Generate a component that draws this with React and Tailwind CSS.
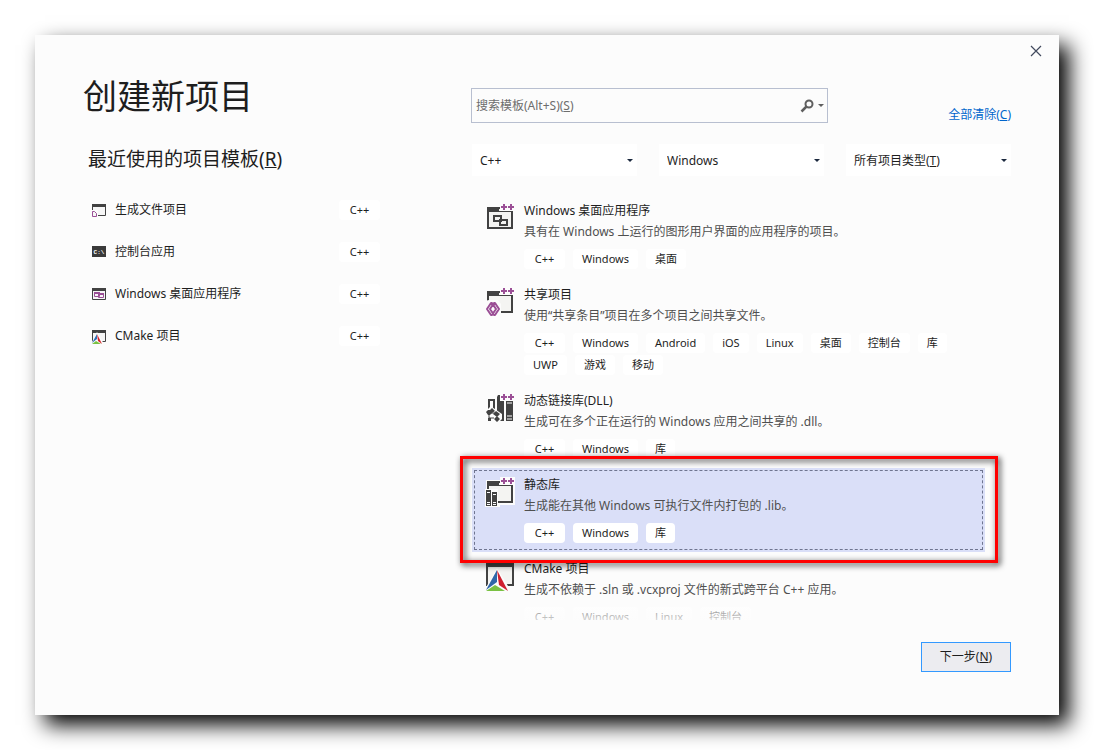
import { useState } from 'react'
import clsx from 'clsx'

const RECENT_TEMPLATES = [
  { id: 'makefile', name: '生成文件项目', tag: 'C++', icon: MakefileIcon },
  { id: 'console', name: '控制台应用', tag: 'C++', icon: ConsoleIcon },
  { id: 'desktop', name: 'Windows 桌面应用程序', tag: 'C++', icon: DesktopSmallIcon },
  { id: 'cmake', name: 'CMake 项目', tag: 'C++', icon: CMakeSmallIcon }
]

const TEMPLATES = [
  {
    id: 'desktop',
    name: 'Windows 桌面应用程序',
    description: '具有在 Windows 上运行的图形用户界面的应用程序的项目。',
    tags: ['C++', 'Windows', '桌面'],
    icon: DesktopIcon
  },
  {
    id: 'shared',
    name: '共享项目',
    description: '使用“共享条目”项目在多个项目之间共享文件。',
    tags: ['C++', 'Windows', 'Android', 'iOS', 'Linux', '桌面', '控制台', '库', 'UWP', '游戏', '移动'],
    icon: SharedIcon
  },
  {
    id: 'dll',
    name: '动态链接库(DLL)',
    description: '生成可在多个正在运行的 Windows 应用之间共享的 .dll。',
    tags: ['C++', 'Windows', '库'],
    icon: DllIcon
  },
  {
    id: 'static',
    name: '静态库',
    description: '生成能在其他 Windows 可执行文件内打包的 .lib。',
    tags: ['C++', 'Windows', '库'],
    icon: StaticLibIcon,
    highlighted: true
  },
  {
    id: 'cmake',
    name: 'CMake 项目',
    description: '生成不依赖于 .sln 或 .vcxproj 文件的新式跨平台 C++ 应用。',
    tags: ['C++', 'Windows', 'Linux', '控制台'],
    icon: CMakeIcon
  }
]

/* ---------- icons ---------- */

function SmallIcon({ children }) {
  return (
    <svg viewBox="0 0 16 16" className="size-4 shrink-0" aria-hidden="true">
      {children}
    </svg>
  )
}

function SmallFrame() {
  return (
    <>
      <path d="M1.5 2.5h13v11h-13z" fill="#f6f6f6" stroke="#424242" />
      <path d="M1 2h14v3H1z" fill="#424242" />
    </>
  )
}

function MakefileIcon() {
  return (
    <SmallIcon>
      <SmallFrame />
      <path d="M0 8h7v8H0z" fill="#fcfcfc" />
      <path d="M1.5 9.5h2l2 2v3h-4z" fill="#f6f6f6" stroke="#9b4f96" />
    </SmallIcon>
  )
}

function ConsoleIcon() {
  return (
    <SmallIcon>
      <path d="M1 2h14v11H1z" fill="#3a3a3a" />
      <text x="8" y="10" fontSize="6" fontWeight="700" textAnchor="middle" fill="#fff" fontFamily="Liberation Mono, monospace">
        C:\
      </text>
    </SmallIcon>
  )
}

function DesktopSmallIcon() {
  return (
    <SmallIcon>
      <SmallFrame />
      <path d="M3.5 6.5h5v4h-5zM7.5 7.5h5v4h-5z" fill="#f6f6f6" stroke="#9b4f96" />
      <path d="M3 6h6v2H3zM7 7h6v2H7z" fill="#9b4f96" />
    </SmallIcon>
  )
}

function CMakeSmallIcon() {
  return (
    <SmallIcon>
      <SmallFrame />
      <path d="M6 4L0 16h13z" fill="#fcfcfc" />
      <path d="M6 6L1 15l5-4z" fill="#2f6fb5" />
      <path d="M6 6l5 10-4-3z" fill="#d81f2a" />
      <path d="M1 16l4-3 5 3z" fill="#7ac143" />
    </SmallIcon>
  )
}

function LargeIcon({ children }) {
  return (
    <svg viewBox="0 0 30 30" className="size-[30px] shrink-0" aria-hidden="true">
      {children}
    </svg>
  )
}

function PlusPlus() {
  return (
    <>
      <path d="M15 0h15v8H15z" fill="#fcfcfc" />
      <path d="M18 1h2v2h2v2h-2v2h-2V5h-2V3h2zM25 1h2v2h2v2h-2v2h-2V5h-2V3h2z" fill="#9b4f96" />
    </>
  )
}

function Frame() {
  return (
    <>
      <path d="M3 5h24v20H3z" fill="#f4f4f2" stroke="#424242" strokeWidth="2" />
      <path d="M2 4h12v4h14v1H2z" fill="#424242" />
    </>
  )
}

function DesktopIcon() {
  return (
    <LargeIcon>
      <Frame />
      <path d="M9 13h7v5H9zM15 17h7v5h-7z" fill="#f4f4f2" stroke="#424242" strokeWidth="2" />
      <PlusPlus />
    </LargeIcon>
  )
}

function SharedIcon() {
  return (
    <LargeIcon>
      <Frame />
      <path d="M0 14l4-1h9l3 4v13H0z" fill="#fcfcfc" />
      <path
        d="M6 16h1l4 6-4 6H6l-4-6zM9 16h1l4 6-4 6H9l-4-6z"
        fill="none"
        stroke="#9b4f96"
        strokeWidth="2"
        strokeLinejoin="round"
      />
      <PlusPlus />
    </LargeIcon>
  )
}

function DllIcon() {
  return (
    <LargeIcon>
      <path d="M4 7h5v9H4z" fill="#fcfcfc" stroke="#424242" strokeWidth="2" />
      <path d="M12 4l1-2h6v26h-7zM21 8h7v20h-7z" fill="#424242" />
      <PlusPlus />
      <path d="M22 10h5M22 23h5M22 26h5" stroke="#fcfcfc" />
      <path d="M3 25v3h3v-3z" fill="#424242" />
      <path d="M0 19l5-5h2l10 7v5l-4 4-7-6z" fill="#fcfcfc" />
      <path d="M1 19l2-2h2l2-2 3 3-3 2-2 2H3zM8 21l3-3 4 3-3 3zM9 26l3-3 3 3-3 3z" fill="#424242" />
      <path d="M4 21v4h5M6 20h4" fill="none" stroke="#424242" />
    </LargeIcon>
  )
}

function StaticLibIcon() {
  return (
    <LargeIcon>
      <path d="M1 3h14V0h15v28H15v2H0V12h1z" fill="#fcfcfc" />
      <Frame />
      <path d="M0 12h13v18H0z" fill="#fcfcfc" />
      <path d="M1 13h5v16H1zM7 15h5v14H7z" fill="#424242" />
      <path d="M2 15h3v1H2zM8 17h3v1H8z" fill="#fcfcfc" />
      <path d="M2 25.5h3M2 27.5h3M8 25.5h3M8 27.5h3" stroke="#fcfcfc" />
      <PlusPlus />
    </LargeIcon>
  )
}

function CMakeIcon() {
  return (
    <LargeIcon>
      <path d="M2 2h26v22H2z" fill="#f4f4f2" stroke="#424242" strokeWidth="2" />
      <path d="M1 1h28v5H1z" fill="#424242" />
      <path d="M12 7L-1 30h27z" fill="#fcfcfc" />
      <path d="M12 9L1 29l11-8z" fill="#2f66a8" />
      <path d="M12 9l11 21-9-6z" fill="#cf2030" />
      <path d="M1 30l9-6 10 6z" fill="#7ac143" />
    </LargeIcon>
  )
}

function Caret({ className }) {
  return (
    <svg viewBox="0 0 6 3" className={clsx('h-[3px] w-[6px] pointer-events-none', className)} aria-hidden="true">
      <path d="M0 0h6L3 3z" fill="currentColor" />
    </svg>
  )
}

/* ---------- pieces ---------- */

function Tag({ children }) {
  return (
    <span
      className={clsx(
        'h-5 rounded bg-white px-[9px] text-center text-[11px] leading-5 whitespace-nowrap text-[#1e1e1e]',
        children === 'C++' && 'min-w-[41px]'
      )}
    >
      {children}
    </span>
  )
}

function FilterSelect({ id, label, placeholder, options, value, onChange }) {
  return (
    <div className="relative min-w-0 flex-1">
      <select
        id={id}
        aria-label={label}
        value={value}
        onChange={e => onChange(e.target.value)}
        className="h-8 w-full appearance-none bg-white pt-[2px] pr-5 pl-2 text-[12px] text-[#1e1e1e] outline-none"
      >
        {options.map(option => (
          <option key={option} value={option}>{option}</option>
        ))}
      </select>
      {placeholder && !value && (
        <label htmlFor={id} className="pointer-events-none absolute top-px left-2 leading-8">
          {placeholder}
        </label>
      )}
      <Caret className="absolute top-[15px] right-[4px] text-[#1b293e]" />
    </div>
  )
}

function TemplateItem({ template, isSelected, onSelect }) {
  const Icon = template.icon

  return (
    <li className="relative">
      <button
        type="button"
        onClick={() => onSelect(template.id)}
        className={clsx(
          'flex w-full items-start gap-[9px] pt-[6px] pr-2 pb-[9px] pl-[13px] text-left',
          isSelected && 'bg-[#dadff8] outline-1 -outline-offset-3 outline-dashed outline-[#6f7590]'
        )}
      >
        <span className="pt-[3px]"><Icon /></span>
        <span className="min-w-0 flex-1">
          <span className="block leading-[21px]">{template.name}</span>
          <span className="block leading-[21px] text-[#4f4f4f]">{template.description}</span>
          <span className="mt-[7px] flex flex-wrap gap-x-2 gap-y-[2px]">
            {template.tags.map(tag => <Tag key={tag}>{tag}</Tag>)}
          </span>
        </span>
      </button>
      {template.highlighted && (
        <div className="pointer-events-none absolute -top-3 -right-[13px] -bottom-[11px] -left-3 z-10 border-3 border-[#ff0000] drop-shadow-[2px_2px_3px_rgba(0,0,0,0.9)]" />
      )}
    </li>
  )
}

export default function App() {
  const [search, setSearch] = useState('')
  const [language, setLanguage] = useState('C++')
  const [platform, setPlatform] = useState('Windows')
  const [projectType, setProjectType] = useState('')
  const [selectedId, setSelectedId] = useState('static')

  const handleClear = (e) => {
    e.preventDefault()
    setSearch('')
    setProjectType('')
  }

  return (
    <div className="bg-white p-[35px] font-['Noto_Sans','Noto_Sans_CJK_SC',sans-serif] text-[12px] text-[#1e1e1e]">
      <div className="bg-[#fcfcfc] shadow-[10px_10px_20px_#000]">
        {/* title bar */}
        <div className="flex justify-end pr-[7px]">
          <button type="button" aria-label="关闭" className="flex size-8 items-center justify-center">
            <svg viewBox="0 0 12 12" className="size-3" aria-hidden="true">
              <path d="M1 1l10 10M11 1L1 11" stroke="#424a5e" strokeWidth="1.200" />
            </svg>
          </button>
        </div>

        <main className="grid grid-cols-[388fr_540fr] px-12">
          {/* recent templates */}
          <section className="min-w-0">
            <h1 className="mt-[9px] text-[34px] leading-10">创建新项目</h1>
            <h2 className="mt-[27px] pl-[5px] text-[19px] leading-8">
              最近使用的项目模板(<u>R</u>)
            </h2>
            <ul className="mt-[14px] mr-[91px] pl-2">
              {RECENT_TEMPLATES.map(({ id, name, tag, icon: Icon }) => (
                <li key={id}>
                  <button type="button" className="flex h-[42px] w-full items-center gap-2 text-left">
                    <Icon />
                    <span className="flex-1">{name}</span>
                    <Tag>{tag}</Tag>
                  </button>
                </li>
              ))}
            </ul>
          </section>

          {/* search, filters and template list */}
          <section className="min-w-0 pt-[21px]">
            <div className="flex items-end justify-between">
              <div className="relative flex h-[35px] w-[357px] items-center border border-[#b8bfd0]">
                <input
                  id="search"
                  type="text"
                  value={search}
                  onChange={e => setSearch(e.target.value)}
                  className="h-full min-w-0 flex-1 px-1 outline-none"
                />
                {!search && (
                  <label htmlFor="search" className="pointer-events-none absolute left-1 text-[#6d6d6d]">
                    搜索模板(Alt+S)(<u>S</u>)
                  </label>
                )}
                <button type="button" aria-label="搜索" className="flex items-center gap-1 pr-[3px] text-[#5f5f5f]">
                  <svg viewBox="0 0 14 14" className="size-[14px]" aria-hidden="true">
                    <circle cx="9" cy="5" r="3.500" fill="none" stroke="currentColor" strokeWidth="2" />
                    <path d="M6.500 7.500L1.500 12.500" stroke="currentColor" strokeWidth="2.500" />
                  </svg>
                  <Caret />
                </button>
              </div>
              <a href="#clear" onClick={handleClear} className="leading-4 text-[#0066cc]">
                全部清除(<u>C</u>)
              </a>
            </div>

            <div className="mt-[21px] flex gap-[22px] pl-px">
              <FilterSelect
                id="language"
                label="语言"
                options={['C++', 'C#', 'Python']}
                value={language}
                onChange={setLanguage}
              />
              <FilterSelect
                id="platform"
                label="平台"
                options={['Windows', 'Linux', 'Android']}
                value={platform}
                onChange={setPlatform}
              />
              <FilterSelect
                id="project-type"
                placeholder={<>所有项目类型(<u>T</u>)</>}
                options={['', '桌面', '控制台', '库']}
                value={projectType}
                onChange={setProjectType}
              />
            </div>

            <div className="relative mt-[18px] -ml-4">
              <ul className="h-[426px] overflow-hidden pr-[26px] pl-[17px]">
                {TEMPLATES.map(template => (
                  <TemplateItem
                    key={template.id}
                    template={template}
                    isSelected={template.id === selectedId}
                    onSelect={setSelectedId}
                  />
                ))}
              </ul>
              {/* fade at the bottom of the list */}
              <div className="pointer-events-none absolute inset-x-0 bottom-0 h-5 bg-linear-to-b from-[#fcfcfc]/30 to-[#fcfcfc]/80" />
            </div>
          </section>
        </main>

        <footer className="flex justify-end px-12 pt-[22px] pb-[43px]">
          <button type="button" className="h-[30px] w-[90px] border border-[#3399ff] bg-[#ececf0]">
            下一步(<u>N</u>)
          </button>
        </footer>
      </div>
    </div>
  )
}
